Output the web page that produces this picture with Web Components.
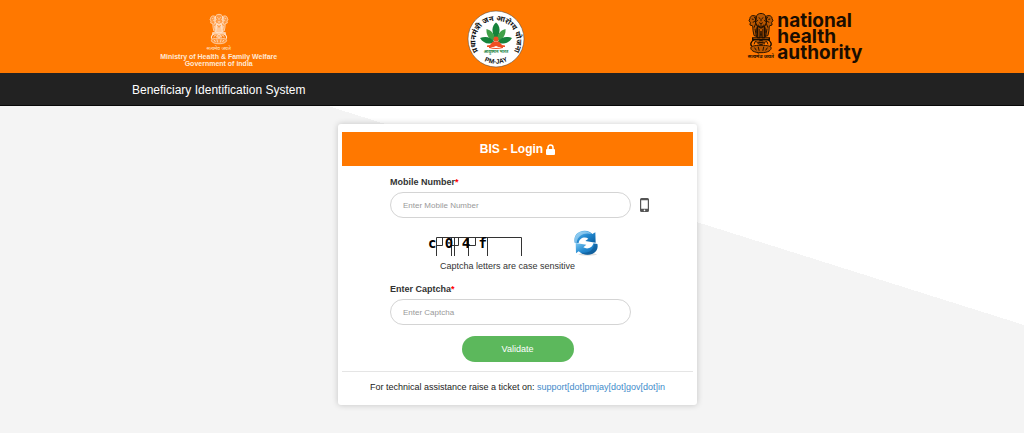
<!DOCTYPE html>
<html lang="en">
<head>
<meta charset="utf-8">
<meta name="viewport" content="width=device-width, initial-scale=1">
<title>Beneficiary Identification System</title>
<style>
    html, body { margin: 0; min-height: 100%; }
    body {
        background: #f4f4f4;
        color: #333;
        font-family: "Liberation Sans", Arial, sans-serif;
        font-size: 9px;
    }
</style>
</head>
<body>
<bis-app></bis-app>

<script>
class StateEmblem extends HTMLElement {
    static get tag() { return 'state-emblem'; }

    constructor() {
        super();
        this.attachShadow({mode:'open'});
        this.shadowRoot.innerHTML = `
        <style>
        :host { display: block; width: 24px; color: inherit; }
        svg { display: block; width: 100%; height: auto; overflow: visible; }
        </style>
        <svg viewBox="0 0 52 88" fill="none" stroke="currentColor" stroke-width="2" role="img" aria-label="State Emblem of India">
            <g fill="currentColor" fill-opacity=".3">
                <path d="M15 9c2-6 6-8 11-8s9 2 11 8l1 9c0 5-4 9-6 11l-6 2-6-2c-3-3-6-6-6-11z"/>
                <path d="M16 8C10 3 2 6 2 12l-2 5 3 3-1 6 6 2c0 7 1 14 3 21l7 2 1-20-5-9z"/>
                <path d="M36 8c6-5 14-2 14 4l2 5-3 3 1 6-6 2c0 7-1 14-3 21l-7 2-1-20 5-9z"/>
                <path d="M19 29c-2 7-2 15-1 25h6l2-15 2 15h6c1-10 1-18-1-25l-7 4z"/>
            </g>
            <path d="M21 10l3 2M31 10l-3 2M26 12v6M22 21q4 4 8 0M19 15l-3 4M33 15l3 4M20 25l3 5M32 25l-3 5M26 23v10"/>
            <path d="M6 13l4 1M8 20q3 0 5-3M11 8l4 6M14 24l-3 8M46 13l-4 1M44 20q-3 0-5-3M41 8l-4 6M38 24l3 8"/>
            <path d="M13 34l3 17M39 34l-3 17M22 34v18M30 34v18M17 31v12M35 31v12"/>
            <path d="M8 54h36v4H8zM11 58c-7 4-9 10-5 14M41 58c7 4 9 10 5 14" stroke-width="3"/>
            <path d="M4 76c0-4 7-6 22-6s22 2 22 6-5 10-22 10S4 80 4 76z" fill="currentColor" fill-opacity=".3"/>
            <circle cx="26" cy="64" r="5"/>
            <path d="M26 59v10M21 64h10M11 68l2-6 6 1 1 5M33 68v-5l6-1 2 6M12 75l4 6M20 73l2 9M32 73l-2 9M40 75l-4 6"/>
        </svg>`;
    }
}
window.customElements.define(StateEmblem.tag, StateEmblem);

class MinistryLogo extends HTMLElement {
    static get tag() { return 'ministry-logo'; }

    constructor() {
        super();
        this.attachShadow({mode:'open'});
        this.shadowRoot.innerHTML = `
        <style>
        :host {
            display: grid; justify-items: center;
            color: #ffe9d6;
            text-align: center;
            white-space: nowrap;
        }
        state-emblem { width: 18px; }
        .motto { font: 5px/8px "Noto Sans Devanagari", "Lohit Devanagari", FreeSans, sans-serif; }
        .name { font-weight: bold; font-size: 7px; line-height: 7px; }
        </style>
        <state-emblem></state-emblem>
        <span class="motto" lang="hi">सत्यमेव जयते</span>
        <span class="name">Ministry of Health &amp; Family Welfare<br>Government of india</span>`;
    }
}
window.customElements.define(MinistryLogo.tag, MinistryLogo);

class PmjayLogo extends HTMLElement {
    static get tag() { return 'pmjay-logo'; }

    constructor() {
        super();
        this.attachShadow({mode:'open'});
        this.shadowRoot.innerHTML = `
        <style>
        :host { display: block; width: 58px; }
        svg { display: block; width: 100%; }
        text { font-family: "Noto Sans Devanagari", "Lohit Devanagari", FreeSans, sans-serif; font-weight: bold; }
        .latin { font-family: "Liberation Sans", Arial, sans-serif; }
        </style>
        <svg viewBox="0 0 116 116" role="img" aria-label="PM-JAY">
            <defs>
                <path id="top" d="M22 82A41 41 0 1 1 94 82"/>
                <path id="bottom" d="M18 88A51 51 0 0 0 98 88"/>
            </defs>
            <circle cx="58" cy="58" r="56" fill="#fff" stroke="#444" stroke-width="1"/>
            <text font-size="15" fill="#111" text-anchor="middle" lang="hi"><textPath href="#top" startOffset="50%">प्रधानमंत्री जन आरोग्य योजना</textPath></text>
            <text class="latin" font-size="13" fill="#111" text-anchor="middle"><textPath href="#bottom" startOffset="50%">PM-JAY</textPath></text>
            <g fill="#16823b">
                <path d="M58 25c9 8 10 19 0 36-10-17-9-28 0-36z"/>
                <path d="M56 62C43 59 38 49 39 38c11 3 17 11 17 24zM60 62c13-3 18-13 17-24-11 3-17 11-17 24z" fill="#3fa047"/>
                <path d="M55 64c-12 6-22 3-29-8 12-4 22-2 29 8zM61 64c12 6 22 3 29-8-12-4-22-2-29 8z"/>
            </g>
            <g fill="#f04e23">
                <circle cx="58" cy="58" r="5"/>
                <path d="M52 63h12l6 7 6 1v3H63l-5-2-5 2H40v-3l6-1z"/>
                <path d="M44 73q14 6 28 0v3q-14 4-28 0z"/>
            </g>
            <text x="58" y="86" font-size="8" fill="#16823b" text-anchor="middle" lang="hi">आयुष्मान भारत</text>
        </svg>`;
    }
}
window.customElements.define(PmjayLogo.tag, PmjayLogo);

class NhaLogo extends HTMLElement {
    static get tag() { return 'nha-logo'; }

    constructor() {
        super();
        this.attachShadow({mode:'open'});
        this.shadowRoot.innerHTML = `
        <style>
        :host { display: flex; gap: 2px; color: #1a0d00; }
        .mark { display: grid; justify-items: center; width: 29px; }
        state-emblem { width: 24px; }
        .motto { font: bold 5px/9px "Noto Sans Devanagari", "Lohit Devanagari", FreeSans, sans-serif; white-space: nowrap; }
        .name { font: 700 19px/16px Inter, sans-serif; }
        </style>
        <div class="mark">
            <state-emblem></state-emblem>
            <span class="motto" lang="hi">सत्यमेव जयते</span>
        </div>
        <div class="name">national<br>health<br>authority</div>`;
    }
}
window.customElements.define(NhaLogo.tag, NhaLogo);

class BisHeader extends HTMLElement {
    static get tag() { return 'bis-header'; }

    constructor() {
        super();
        this.attachShadow({mode:'open'});
        this.shadowRoot.innerHTML = `
        <style>
        :host { display: block; }
        .logos {
            display: grid;
            grid-template-columns: 9fr 9fr 11fr;
            justify-items: center;
            align-items: center;
            min-height: 73px;
            padding: 0 50px 0 80px;
            background: #ff7800;
            box-sizing: border-box;
        }
        ministry-logo { padding-top: 8px; }
        pmjay-logo { padding-top: 4px; }
        nha-logo { padding-top: 2px; }
        nav {
            background: #222;
            border-bottom: 1px solid #080808;
            padding: 2px 132px 0;
            color: #fff;
            font-size: 12px;
            line-height: 30px;
        }
        </style>
        <div class="logos">
            <ministry-logo></ministry-logo>
            <pmjay-logo></pmjay-logo>
            <nha-logo></nha-logo>
        </div>
        <nav><slot></slot></nav>`;
    }
}
window.customElements.define(BisHeader.tag, BisHeader);

class BisField extends HTMLElement {
    static get tag() { return 'bis-field'; }

    constructor() {
        super();
        this.attachShadow({mode:'open'});
        this.shadowRoot.innerHTML = `
        <style>
        :host { display: block; }
        label { display: block; margin-bottom: 3px; font-weight: bold; line-height: 14px; }
        label span { color: #f00; }
        .row { display: grid; grid-template-columns: 1fr 9px; gap: 9px; align-items: center; }
        input {
            width: 100%; height: 26px;
            box-sizing: border-box;
            border: 1px solid #d4d4d4;
            border-radius: 13px;
            padding: 0 12px;
            background: #fff;
            color: #555;
            font: 8px "Liberation Sans", Arial, sans-serif;
        }
        input::placeholder { color: #999; opacity: 1; }
        </style>
        <label for="box"></label>
        <div class="row"><input id="box" type="text" required><slot></slot></div>`;
        this.label = this.shadowRoot.querySelector('label');
        this.input = this.shadowRoot.querySelector('input');
    }

    connectedCallback() {
        this.label.innerHTML = `${this.getAttribute('label')}<span>*</span>`;
        this.input.placeholder = this.getAttribute('placeholder');
    }
}
window.customElements.define(BisField.tag, BisField);

class CaptchaBox extends HTMLElement {
    static get tag() { return 'captcha-box'; }

    constructor() {
        super();
        this.attachShadow({mode:'open'});
        this.shadowRoot.innerHTML = `
        <style>
        :host { display: block; }
        .row { display: flex; justify-content: space-between; padding: 0 50px 0 35px; }
        svg { display: block; }
        text { font: bold 14px "DejaVu Sans Mono", monospace; white-space: pre; }
        button { border: 0; padding: 0; background: none; cursor: pointer; }
        p { margin: 4px 0 0; padding-right: 24px; line-height: 12px; text-align: center; }
        </style>
        <div class="row">
            <svg width="120" height="26" viewBox="0 0 120 26">
                <path d="M11.500 7.500H96.500M11.500 7.500V26M26.500 7.500V26M29.500 7.500V26M43.500 7.500V26M62.500 7.500V26M96.500 7.500V26M17.500 7.500V15.500H11.500M33.500 7.500V15.500H26.500M50.500 7.500V15.500H43.500" fill="none" stroke="#333"/>
                <text x="3" y="18">c 0 4 f</text>
            </svg>
            <button type="button" aria-label="Refresh captcha">
                <svg width="26" height="26" viewBox="0 0 78 78">
                    <defs>
                        <linearGradient id="blue" x1="0" y1="0" x2="1" y2="1">
                            <stop offset="0" stop-color="#7cc8f2"/>
                            <stop offset=".5" stop-color="#2389d0"/>
                            <stop offset="1" stop-color="#0a5ea0"/>
                        </linearGradient>
                    </defs>
                    <ellipse cx="44" cy="73" rx="28" ry="4" fill="#ddd"/>
                    <path d="M5 38C0 16 16 1 36 2c10 0 17 4 22 10l9-5 1 31-31-5 9-7C36 18 18 24 17 39z" fill="url(#blue)"/>
                    <path d="M5 38C1 18 16 3 36 4c8 0 14 3 19 8C36 7 14 14 11 38z" fill="#b4e0f8" opacity=".6"/>
                    <path d="M73 42c4 20-10 32-30 32-12 0-20-4-26-10l-8 6-1-31 32 5-9 8c12 8 28 1 30-12z" fill="url(#blue)"/>
                    <path d="M73 42c4 20-10 32-30 32-8 0-14-2-19-6 20 3 38-6 39-27z" fill="#0b4f87" opacity=".5"/>
                </svg>
            </button>
        </div>
        <p>Captcha letters are case sensitive</p>`;
    }
}
window.customElements.define(CaptchaBox.tag, CaptchaBox);

class LoginCard extends HTMLElement {
    static get tag() { return 'login-card'; }

    constructor() {
        super();
        this.attachShadow({mode:'open'});
        this.shadowRoot.innerHTML = `
        <style>
        :host {
            display: block;
            width: 100%; max-width: 359px;
            box-sizing: border-box;
            padding: 8px 4px 0;
            background: #fff;
            border-radius: 3px;
            box-shadow: 0 0 6px rgba(0, 0, 0, .2);
        }
        h1 {
            display: flex; justify-content: center; align-items: center; gap: 3px;
            margin: 0;
            background: #ff7800;
            color: #fff;
            font-size: 12px;
            line-height: 34px;
        }
        form { display: grid; padding: 9px 44px 9px 48px; }
        captcha-box { margin: 12px 0 10px; }
        .validate {
            justify-self: center;
            width: 112px; height: 26px;
            margin: 11px 4px 0 0;
            border: 0;
            border-radius: 13px;
            background: #5cb85c;
            color: #fff;
            font: 9px "Liberation Sans", Arial, sans-serif;
        }
        footer {
            border-top: 1px solid #e5e5e5;
            padding: 9px 0 12px;
            color: #222;
            line-height: 12px;
            text-align: center;
        }
        a { color: #428bca; text-decoration: none; }
        </style>
        <h1>BIS - Login
            <svg width="9" height="11" viewBox="0 0 9 11" aria-hidden="true">
                <path d="M2 5V3.500a2.500 2.500 0 0 1 5 0V5" fill="none" stroke="#fff" stroke-width="1.500"/>
                <rect y="5" width="9" height="6" rx="1" fill="#fff"/>
            </svg>
        </h1>
        <form>
            <bis-field label="Mobile Number" placeholder="Enter Mobile Number">
                <svg width="9" height="14" viewBox="0 0 9 14" aria-hidden="true">
                    <path fill="#555" fill-rule="evenodd" d="M1.500 0h6A1.500 1.500 0 0 1 9 1.500v11A1.500 1.500 0 0 1 7.500 14h-6A1.500 1.500 0 0 1 0 12.500v-11A1.500 1.500 0 0 1 1.500 0zM1.200 2.200v8.600h6.600V2.200zM4.500 11.600a.8.8 0 1 0 0 1.600.8.8 0 0 0 0-1.600z"/>
                </svg>
            </bis-field>
            <captcha-box></captcha-box>
            <bis-field label="Enter Captcha" placeholder="Enter Captcha"></bis-field>
            <button class="validate" type="button">Validate</button>
        </form>
        <footer>For technical assistance raise a ticket on: <a href="#support">support[dot]pmjay[dot]gov[dot]in</a></footer>`;
    }
}
window.customElements.define(LoginCard.tag, LoginCard);

class BisApp extends HTMLElement {
    static get tag() { return 'bis-app'; }

    constructor() {
        super();
        this.attachShadow({mode:'open'});
        this.shadowRoot.innerHTML = `
        <style>
        :host { display: flex; flex-direction: column; min-height: 100vh; }
        main {
            flex: 1;
            display: flex; justify-content: center; align-items: flex-start;
            padding: 18px 0 27px 11px;
            /* white wedge running down to the right edge */
            background: linear-gradient(to top right, #f4f4f4 50%, #fff 50%) right top / 68% 67% no-repeat;
        }
        </style>
        <bis-header>Beneficiary Identification System</bis-header>
        <main><login-card></login-card></main>`;
    }
}
window.customElements.define(BisApp.tag, BisApp);
</script>
</body>
</html>
